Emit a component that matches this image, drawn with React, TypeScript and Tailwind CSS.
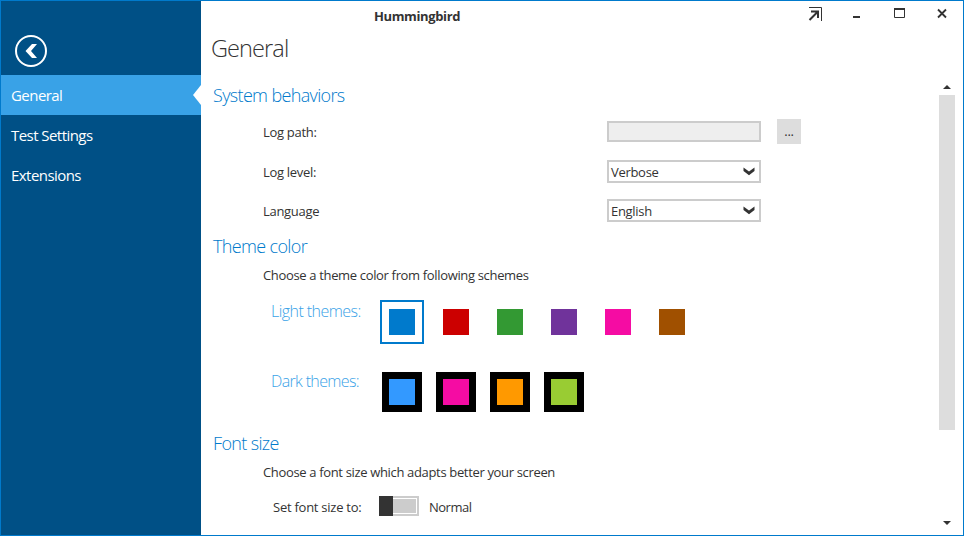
import React from "react";

const navItems = ["General", "Test Settings", "Extensions"];
const lightThemes = ["#007acc", "#cc0000", "#339933", "#70339b", "#f50ca3", "#a05000"];
const darkThemes = ["#3399ff", "#f50ca3", "#ff9900", "#99cc33"];

function Sidebar() {
  return (
    <aside className="flex w-[200px] shrink-0 flex-col bg-[#005086] text-[15px] text-white">
      <div className="flex h-[74px] items-end pb-2 pl-3.5">
        <svg className="h-8 w-8" viewBox="0 0 32 32" fill="none">
          <circle cx="16" cy="16" r="15" stroke="white" strokeWidth="2" />
          <path d="M17 9H22L16 16L22 23H17L10.5 16Z" fill="white" />
        </svg>
      </div>
      {navItems.map((item, i) => (
        <div
          key={item}
          className={`flex h-10 items-center justify-between pl-2.5 ${i === 0 ? "bg-[#39a2e7]" : ""}`}
        >
          <span className="tracking-[-0.55px]">{item}</span>
          {i === 0 && (
            <svg className="h-5 w-2" viewBox="0 0 8 20">
              <path d="M8 0L0 10L8 20Z" fill="white" />
            </svg>
          )}
        </div>
      ))}
    </aside>
  );
}

function SectionTitle({ children }: { children: React.ReactNode }) {
  return (
    <h2 className="h-6 pl-3 text-lg leading-[25px] font-light tracking-[-0.65px] text-[#007acc]">{children}</h2>
  );
}

function Select({ value }: { value: string }) {
  return (
    <div className="flex h-[23px] w-[154px] items-center justify-between border-2 border-[#cccccc] bg-white pr-1 pl-0.5">
      <span className="pt-0.5">{value}</span>
      <svg className="h-[9px] w-3" viewBox="0 0 12 9">
        <path d="M0.5 0.5L6 4.5L11.5 0.5V4L6 8.3L0.5 4Z" fill="#333333" />
      </svg>
    </div>
  );
}

function TitleBar() {
  return (
    <header className="flex h-[30px] items-center justify-between pr-[15px] pl-[173px]">
      <span className="pt-0.5 text-[13px] font-bold tracking-[-0.38px]">Hummingbird</span>
      <div className="flex h-full items-start pt-1.5">
        <svg className="h-4 w-[142px]" viewBox="0 0 142 16" fill="none">
          <path d="M3 .5H15.5V14" stroke="#333333" />
          <path d="M3.5 13L11.5 5M5 4.5H12V11" stroke="#333333" strokeWidth="2" />
          <path d="M47 9H54V11H47Z" fill="#333333" />
          <path d="M88.5 2V10.5H98.5V2" stroke="#333333" />
          <path d="M88 1H99V3H88Z" fill="#333333" />
          <path d="M132 2.5L140 10.5M140 2.5L132 10.5" stroke="#333333" strokeWidth="1.8" />
        </svg>
      </div>
    </header>
  );
}

function Settings() {
  return (
    <div className="flex-1">
      <div className="h-[18px]" />
      <SectionTitle>System behaviors</SectionTitle>
      <div className="mt-3 flex h-[25px] items-center pl-[62px]">
        <span className="w-[344px] pt-0.5">Log path:</span>
        <div className="h-[21px] w-[154px] border-2 border-[#cccccc] bg-[#eeeeee]" />
        <div className="ml-4 flex h-[25px] w-6 items-center justify-center bg-[#dddddd] pt-px">...</div>
      </div>
      <div className="mt-4 flex h-[23px] items-center pl-[62px]">
        <span className="w-[344px] pt-0.5">Log level:</span>
        <Select value="Verbose" />
      </div>
      <div className="mt-4 flex h-[23px] items-center pl-[62px]">
        <span className="w-[344px] pt-0.5">Language</span>
        <Select value="English" />
      </div>

      <div className="h-3" />
      <SectionTitle>Theme color</SectionTitle>
      <p className="mt-[7px] h-5 pl-[62px] leading-5 tracking-[-0.34px]">Choose a theme color from following schemes</p>
      <div className="mt-[15px] flex h-11 pl-[70px]">
        <span className="w-[109px] text-base leading-[22px] font-light tracking-[-0.55px] text-[#39a2e7]">
          Light themes:
        </span>
        <div className="flex gap-2.5">
          {lightThemes.map((color, i) => (
            <div
              key={color}
              className={`flex h-11 w-11 items-center justify-center border-2 ${i === 0 ? "border-[#007acc]" : "border-transparent"}`}
            >
              <div className="h-[26px] w-[26px]" style={{ backgroundColor: color }} />
            </div>
          ))}
        </div>
      </div>
      <div className="mt-7 flex h-10 pl-[70px]">
        <span className="w-[111px] text-base leading-[18px] font-light tracking-[-0.65px] text-[#39a2e7]">
          Dark themes:
        </span>
        <div className="flex gap-3.5">
          {darkThemes.map((color) => (
            <div key={color} className="h-10 w-10 border-[7px] border-black" style={{ backgroundColor: color }} />
          ))}
        </div>
      </div>

      <div className="h-[19px]" />
      <SectionTitle>Font size</SectionTitle>
      <p className="mt-[7px] h-5 pl-[62px] leading-5 tracking-[-0.34px]">Choose a font size which adapts better your screen</p>
      <div className="mt-3.5 flex h-5 pl-[72px] leading-[22px]">
        <span className="w-[106px] tracking-[-0.25px]">Set font size to:</span>
        <div className="flex h-5 w-10 bg-[#cccccc]">
          <div className="w-3.5 bg-[#333333]" />
          <div className="my-0.5 mr-0.5 flex-1 border border-l-0 border-white" />
        </div>
        <span className="ml-2.5 tracking-[-0.5px]">Normal</span>
      </div>
    </div>
  );
}

function ScrollBar() {
  return (
    <div className="flex w-4 flex-col items-center pt-5">
      <svg className="h-1 w-2" viewBox="0 0 8 4">
        <path d="M0 4L4 0L8 4Z" fill="#333333" />
      </svg>
      <div className="mt-1.5 h-[335px] w-4 bg-[#dddddd]" />
      <svg className="mt-[91px] h-1 w-2" viewBox="0 0 8 4">
        <path d="M0 0H8L4 4Z" fill="#333333" />
      </svg>
    </div>
  );
}

export default function App() {
  return (
    <div className="flex h-[536px] w-[964px] overflow-hidden border border-[#007acc] bg-white font-['Open_Sans',sans-serif] text-[13px] tracking-[-0.3px] text-[#333333]">
      <Sidebar />
      <main className="flex flex-1 flex-col">
        <TitleBar />
        <h1 className="h-[34px] pl-2.5 text-[23.5px] leading-[35px] font-light tracking-[-0.9px]">General</h1>
        <div className="flex flex-1 pr-2">
          <Settings />
          <ScrollBar />
        </div>
      </main>
    </div>
  );
}
